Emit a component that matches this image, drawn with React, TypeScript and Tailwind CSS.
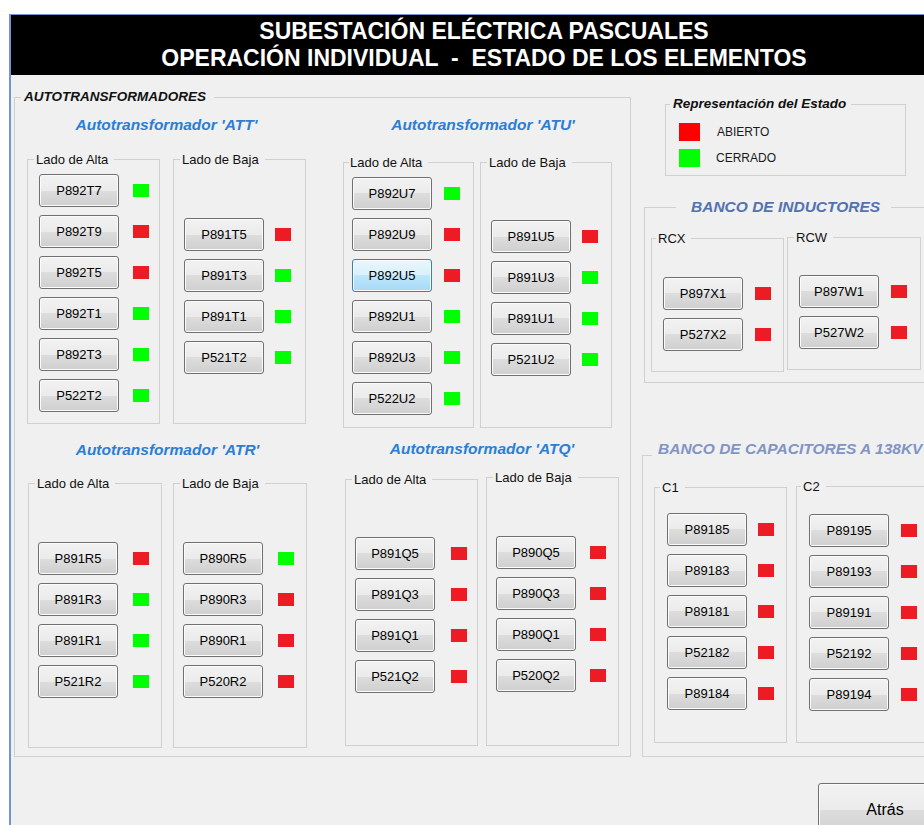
import React from 'react';

type Item = { name: string; on: boolean; hover?: boolean };

const btnBase =
  'flex h-[33px] w-[80px] shrink-0 items-center justify-center rounded-[3px] border text-[13px] leading-none text-black shadow-[inset_0_0_0_1px_#fbfbfb]';
const btnNormal = 'border-[#707070] bg-[linear-gradient(#f2f2f2_0%,#ebebeb_50%,#dddddd_50%,#cfcfcf_100%)]';
const btnHover = 'border-[#3c7fb1] bg-[linear-gradient(#eaf6fd_0%,#d9f0fc_50%,#bee6fd_50%,#a7d9f5_100%)]';

function Switch({ item, gap }: { item: Item; gap: string }) {
  return (
    <div className="flex items-center">
      <button className={`${btnBase} ${item.hover ? btnHover : btnNormal}`}>{item.name}</button>
      <span className={`${gap} h-[13px] w-[16px] ${item.on ? 'bg-[#00ff00]' : 'bg-[#ed1c24]'}`} />
    </div>
  );
}

interface SideProps {
  label: string;
  items: Item[];
  box: string;
  inner: string;
  gap: string;
  legendPos?: string;
}

// one "Lado de ..." group box with its breakers
function Side({ label, items, box, inner, gap, legendPos = 'ml-[6px] pl-[2px]' }: SideProps) {
  return (
    <fieldset className={`shrink-0 border border-[#d0d0d0] ${box}`}>
      <legend className={`pr-[6px] text-[13px] leading-[15px] text-[#111] ${legendPos}`}>{label}</legend>
      <div className={`flex flex-col gap-[8px] ${inner}`}>
        {items.map((it) => (
          <Switch key={it.name} item={it} gap={gap} />
        ))}
      </div>
    </fieldset>
  );
}

const titleCls = 'h-[20px] text-center text-[15.5px] font-bold italic leading-[20px] text-[#2b7ed4]';

const att = {
  alta: [
    { name: 'P892T7', on: true },
    { name: 'P892T9', on: false },
    { name: 'P892T5', on: false },
    { name: 'P892T1', on: true },
    { name: 'P892T3', on: true },
    { name: 'P522T2', on: true },
  ],
  baja: [
    { name: 'P891T5', on: false },
    { name: 'P891T3', on: true },
    { name: 'P891T1', on: true },
    { name: 'P521T2', on: true },
  ],
};

const atu = {
  alta: [
    { name: 'P892U7', on: true },
    { name: 'P892U9', on: false },
    { name: 'P892U5', on: false, hover: true },
    { name: 'P892U1', on: true },
    { name: 'P892U3', on: true },
    { name: 'P522U2', on: true },
  ],
  baja: [
    { name: 'P891U5', on: false },
    { name: 'P891U3', on: true },
    { name: 'P891U1', on: true },
    { name: 'P521U2', on: true },
  ],
};

const atr = {
  alta: [
    { name: 'P891R5', on: false },
    { name: 'P891R3', on: true },
    { name: 'P891R1', on: true },
    { name: 'P521R2', on: true },
  ],
  baja: [
    { name: 'P890R5', on: true },
    { name: 'P890R3', on: false },
    { name: 'P890R1', on: false },
    { name: 'P520R2', on: false },
  ],
};

const atq = {
  alta: [
    { name: 'P891Q5', on: false },
    { name: 'P891Q3', on: false },
    { name: 'P891Q1', on: false },
    { name: 'P521Q2', on: false },
  ],
  baja: [
    { name: 'P890Q5', on: false },
    { name: 'P890Q3', on: false },
    { name: 'P890Q1', on: false },
    { name: 'P520Q2', on: false },
  ],
};

const rcx = [
  { name: 'P897X1', on: false },
  { name: 'P527X2', on: false },
];
const rcw = [
  { name: 'P897W1', on: false },
  { name: 'P527W2', on: false },
];
const c1 = ['P89185', 'P89183', 'P89181', 'P52182', 'P89184'].map((name) => ({ name, on: false }));
const c2 = ['P89195', 'P89193', 'P89191', 'P52192', 'P89194'].map((name) => ({ name, on: false }));

export default function App() {
  return (
    <div className="h-[825px] w-[924px] overflow-hidden bg-white pl-[9px] pt-[14px] font-['Liberation_Sans',Arial,sans-serif]">
      <div className="h-[830px] w-[948px] border-l-2 border-t border-[#7394cf] bg-[#f0f0f0]">
        <header className="h-[60px] whitespace-pre bg-black pt-[3px] text-center text-[23px] font-bold leading-[27px] text-white">
          <div>SUBESTACIÓN ELÉCTRICA PASCUALES</div>
          <div>OPERACIÓN INDIVIDUAL  -  ESTADO DE LOS ELEMENTOS</div>
        </header>

        <div className="flex items-start">
          {/* Autotransformadores */}
          <fieldset className="ml-[3px] mt-[14px] h-[668px] w-[617px] shrink-0 border border-[#d0d0d0]">
            <legend className="ml-[6px] pl-[3px] pr-[8px] text-[13.5px] font-bold italic leading-[16px] text-[#111]">
              AUTOTRANSFORMADORES
            </legend>

            <div className="flex items-start">
              <div className="ml-[12px] flex flex-col">
                <div className={`mt-[10px] ${titleCls}`}>Autotransformador 'ATT'</div>
                <div className="flex items-start">
                  <Side label="Lado de Alta" items={att.alta} box="mt-[17px] h-[272px] w-[133px]" inner="pl-[11px] pt-[7px]" gap="ml-[14px]" />
                  <Side label="Lado de Baja" items={att.baja} box="ml-[13px] mt-[17px] h-[272px] w-[133px]" inner="pl-[10px] pt-[51px]" gap="ml-[11px]" />
                </div>
              </div>
              <div className="ml-[37px] flex flex-col">
                <div className={`mt-[10px] pl-[11px] ${titleCls}`}>Autotransformador 'ATU'</div>
                <div className="flex items-start">
                  <Side label="Lado de Alta" items={atu.alta} box="mt-[20px] h-[273px] w-[131px]" inner="pl-[8px] pt-[7px]" gap="ml-[12px]" legendPos="ml-[5px] pl-[1px]" />
                  <Side label="Lado de Baja" items={atu.baja} box="ml-[6px] mt-[20px] h-[273px] w-[132px]" inner="pl-[10px] pt-[50px]" gap="ml-[11px]" />
                </div>
              </div>
            </div>

            <div className="flex items-start">
              <div className="ml-[13px] flex flex-col">
                <div className={`mt-[12px] ${titleCls}`}>Autotransformador 'ATR'</div>
                <div className="flex items-start">
                  <Side label="Lado de Alta" items={atr.alta} box="mt-[16px] h-[272px] w-[134px]" inner="pl-[9px] pt-[51px]" gap="ml-[15px]" />
                  <Side label="Lado de Baja" items={atr.baja} box="ml-[11px] mt-[16px] h-[272px] w-[134px]" inner="pl-[9px] pt-[51px]" gap="ml-[15px]" />
                </div>
              </div>
              <div className="ml-[38px] flex flex-col">
                <div className={`mt-[11px] ${titleCls}`}>Autotransformador 'ATQ'</div>
                <div className="flex items-start">
                  <Side label="Lado de Alta" items={atq.alta} box="mt-[13px] h-[274px] w-[133px]" inner="pl-[9px] pt-[50px]" gap="ml-[16px]" />
                  <Side label="Lado de Baja" items={atq.baja} box="ml-[8px] mt-[11px] h-[276px] w-[133px]" inner="pl-[9px] pt-[51px]" gap="ml-[14px]" />
                </div>
              </div>
            </div>
          </fieldset>

          {/* right column */}
          <div className="ml-[11px] flex flex-col items-start">
            <fieldset className="ml-[23px] mt-[21px] h-[80px] w-[241px] border border-[#d0d0d0]">
              <legend className="ml-[4px] pl-[3px] pr-[5px] text-[13.5px] font-bold italic leading-[16px] text-[#111]">
                Representación del Estado
              </legend>
              <div className="pl-[13px] pt-[11px] text-[12px] text-[#1a1a1a]">
                <div className="flex items-center">
                  <span className="h-[18px] w-[21px] bg-[#ff0000]" />
                  <span className="ml-[17px]">ABIERTO</span>
                </div>
                <div className="mt-[8px] flex items-center">
                  <span className="h-[18px] w-[21px] bg-[#00ff00]" />
                  <span className="ml-[16px]">CERRADO</span>
                </div>
              </div>
            </fieldset>

            <fieldset className="ml-[2px] mt-[22px] h-[185px] w-[286px] border border-[#d0d0d0]">
              <legend className="ml-[31px] pl-[15px] pr-[11px] text-[15.5px] font-bold italic leading-[18px] text-[#5372b2]">
                BANCO DE INDUCTORES
              </legend>
              <div className="flex items-start">
                <Side label="RCX" items={rcx} box="ml-[6px] mt-[15px] h-[141px] w-[133px]" inner="pl-[11px] pt-[31px]" gap="ml-[12px]" legendPos="ml-[4px] pl-[2px]" />
                <Side label="RCW" items={rcw} box="ml-[3px] mt-[14px] h-[140px] w-[134px]" inner="pl-[11px] pt-[30px]" gap="ml-[12px]" legendPos="ml-[6px] pl-[2px]" />
              </div>
            </fieldset>

            <fieldset className="mt-[57px] h-[317px] w-[290px] border border-[#d0d0d0]">
              <legend className="ml-[9px] h-[30px] pl-[6px] pr-[8px] text-[15.5px] font-bold italic leading-[18px] text-[#8194c4]">
                BANCO DE CAPACITORES A 138KV
              </legend>
              <div className="flex items-start">
                <Side label="C1" items={c1} box="ml-[11px] mt-[10px] h-[263px] w-[133px]" inner="pl-[12px] pt-[18px]" gap="ml-[11px]" legendPos="ml-[5px] pl-[2px]" />
                <Side label="C2" items={c2} box="ml-[9px] mt-[9px] h-[264px] w-[134px]" inner="pl-[12px] pt-[20px]" gap="ml-[12px]" legendPos="ml-[4px] pl-[2px]" />
              </div>
            </fieldset>
          </div>
        </div>

        <button className={`ml-[807px] mt-[26px] flex h-[54px] w-[134px] items-center justify-center rounded-[3px] border text-[16px] text-black shadow-[inset_0_0_0_1px_#fbfbfb] ${btnNormal}`}>
          Atrás
        </button>
      </div>
    </div>
  );
}
